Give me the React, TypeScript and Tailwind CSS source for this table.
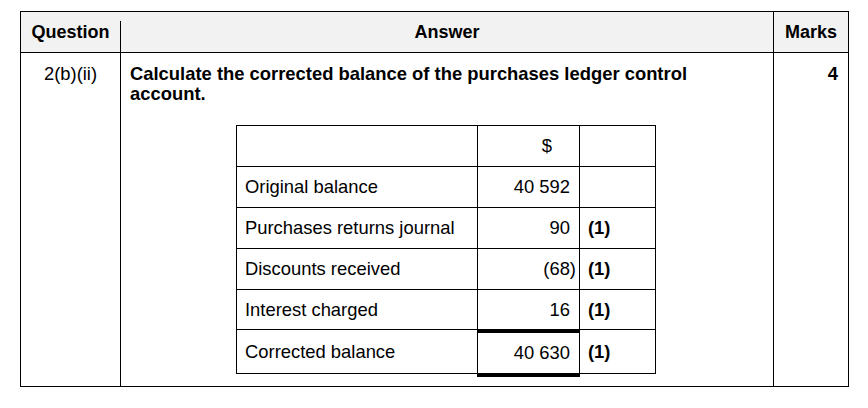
const rows = [
  { label: "Original balance", amount: "40 592", mark: "" },
  { label: "Purchases returns journal", amount: "90", mark: "(1)" },
  { label: "Discounts received", amount: "(68)", mark: "(1)", hang: true },
  { label: "Interest charged", amount: "16", mark: "(1)" },
];

const App = () => {
  return (
    <div className="w-[868px] h-[408px] bg-white pt-[11px] pl-[20px] text-black text-[18px] leading-[20px] font-['Liberation_Sans',Arial,sans-serif]">
      <div className="w-[829px] border border-black">
        {/* header */}
        <div className="flex h-[41px] bg-[#f2f2f2] border-b border-black font-bold">
          <div className="w-[99px] flex items-center justify-center">Question</div>
          <div className="w-px bg-black mt-[9px]" />
          <div className="flex-1 flex items-center justify-center">Answer</div>
          <div className="w-[75px] border-l border-black flex items-center justify-center">Marks</div>
        </div>

        {/* body */}
        <div className="flex h-[333px] text-[18.4px]">
          <div className="w-[100px] border-r border-black pt-[11px] text-center">2(b)(ii)</div>
          <div className="flex-1 border-r border-black pt-[11px] pl-[9px]">
            <p className="font-bold">
              Calculate the corrected balance of the purchases ledger control
              <br />
              account.
            </p>

            <div className="mt-[21px] ml-[106px] w-[420px] border border-black">
              <div className="flex h-[41px] border-b border-black">
                <div className="w-[241px] border-r border-black" />
                <div className="w-[102px] border-r border-black flex items-center justify-end pr-[27px]">$</div>
                <div className="flex-1" />
              </div>
              {rows.map((row) => (
                <div
                  key={row.label}
                  className={`flex border-b border-black ${row.label === "Interest charged" ? "h-[40px]" : "h-[41px]"}`}
                >
                  <div className="w-[241px] border-r border-black flex items-center pl-[8px]">{row.label}</div>
                  <div className="w-[102px] border-r border-black flex items-center justify-end pr-[9px]">
                    <span className={row.hang ? "-mr-[6px]" : ""}>{row.amount}</span>
                  </div>
                  <div className="flex-1 flex items-center pl-[8px] font-bold">{row.mark}</div>
                </div>
              ))}
              <div className="flex h-[43px]">
                <div className="w-[241px] border-r border-black flex items-center pl-[8px]">Corrected balance</div>
                <div className="relative w-[102px] border-r border-black border-t-[3px] border-t-black flex items-center justify-end pr-[9px] after:absolute after:left-[-1px] after:right-[-1px] after:top-full after:h-[4px] after:bg-black">
                  40 630
                </div>
                <div className="flex-1 flex items-center pl-[8px] font-bold">(1)</div>
              </div>
            </div>
          </div>
          <div className="w-[74px] pt-[11px] pr-[10px] text-right font-bold">4</div>
        </div>
      </div>
    </div>
  );
};

export default App;
